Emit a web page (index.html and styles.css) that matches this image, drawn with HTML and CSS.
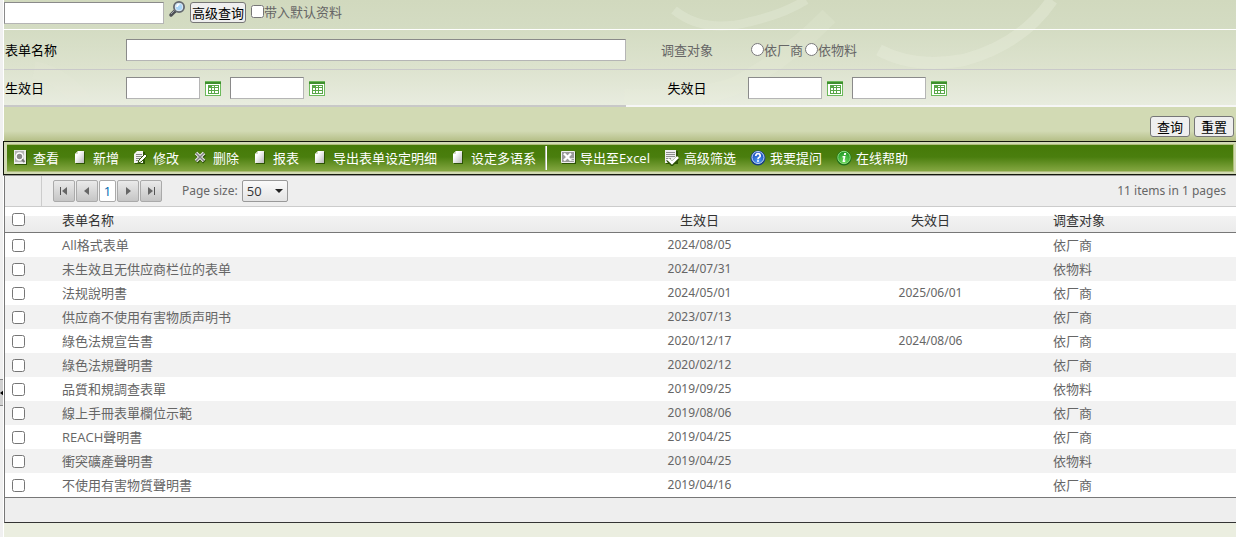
FILE: index.html
```html
<!DOCTYPE html>
<html lang="zh-CN">
<head>
<meta charset="utf-8">
<title>表单设定</title>
<link rel="stylesheet" href="styles.css">
</head>
<body>
<svg width="0" height="0" class="defs" aria-hidden="true">
  <defs>
    <linearGradient id="paper" x1="0" y1="0" x2="1" y2="1"><stop offset="0.3" stop-color="#fff"/><stop offset="1" stop-color="#b9b9b9"/></linearGradient>
    <radialGradient id="blue" cx="0.5" cy="0.8" r="0.8"><stop offset="0" stop-color="#4f9af5"/><stop offset="1" stop-color="#1546b4"/></radialGradient>
    <radialGradient id="green" cx="0.5" cy="0.85" r="0.8"><stop offset="0" stop-color="#6fdc5f"/><stop offset="1" stop-color="#219a27"/></radialGradient>
    <symbol id="i-doc" viewBox="0 0 16 16"><path d="M6 2h6v12H3V5z" fill="#2c5204"/><path d="M5 1h6v12H2V4z" fill="url(#paper)"/><path d="M2 4h3V1z" fill="#d5dcc8"/></symbol>
    <symbol id="i-cal" viewBox="0 0 16 16"><path d="M0 1h16v15H0z" fill="#6cba5b"/><path d="M0 1h16v1H0z" fill="#6cba5b"/><path d="M0 2h16v2H0z" fill="#3f8f2e"/><path d="M1 4h14v11H1z" fill="#fff"/><path d="M3 5h11v9H3z" fill="#58a647"/><path d="M7 6h2v1H7zM10 6h3v1h-3zM4 8h2v2H4zM7 8h2v2H7zM10 8h3v2h-3zM4 11h2v2H4zM7 11h2v2H7zM10 11h3v2h-3z" fill="#fff"/></symbol>
  </defs>
</svg>
<div class="page">
  <aside class="gutter">
    <button class="handle" aria-label="收起"><svg viewBox="0 0 4 8"><path d="M4 1v6L0 4z" fill="#000"/></svg></button>
  </aside>
  <main class="main">
    <form class="query">
      <svg class="swirl" viewBox="0 0 1232 107" preserveAspectRatio="none" aria-hidden="true">
        <g fill="none" stroke="#e9eedc">
          <path d="M670 10Q700 34 745 22Q780 14 802 0" stroke-width="9" opacity="0.35"/>
          <path d="M1048 0Q1018 44 960 60Q910 69 875 50" stroke-width="12" opacity="0.4"/>
          <path d="M825 16Q782 60 731 86Q690 101 620 98" stroke-width="18" opacity="0.2"/>
          <path d="M30 70Q60 76 80 104" stroke-width="18" opacity="0.15"/>
        </g>
      </svg>
      <div class="search">
        <input class="text keyword" type="text" aria-label="关键字">
        <button class="plain look" type="button" aria-label="查询"><svg class="lens" viewBox="0 0 18 18"><path d="M7 11l-4 4" stroke="#4d4f55" stroke-width="3.500" stroke-linecap="round"/><path d="M7 10l-4 4" stroke="#a4a7ad"/><circle cx="11" cy="7" r="5" fill="#a9d6f8" stroke="#64696f" stroke-width="2"/><circle cx="11" cy="7" r="3.800" fill="none" stroke="#dfe9f2"/><path d="M9 7q0-2.500 2.500-2.500" stroke="#fff" stroke-width="1.500" fill="none"/></svg></button>
        <button class="btn" type="button">高级查询</button>
        <label class="choice"><input type="checkbox">带入默认资料</label>
      </div>
      <div class="row row-name">
        <label for="name">表单名称</label>
        <input class="text" id="name" type="text">
        <span class="mid muted">调查对象</span>
        <div class="choices">
          <label class="choice"><input type="radio" name="target">依厂商</label>
          <label class="choice"><input type="radio" name="target">依物料</label>
        </div>
      </div>
      <div class="row row-date">
        <label for="eff">生效日</label>
        <div class="range">
          <input class="text" id="eff" type="text"><button class="plain" type="button" aria-label="选择日期"><svg><use href="#i-cal"/></svg></button>
          <input class="text" type="text" aria-label="生效日至"><button class="plain" type="button" aria-label="选择日期"><svg><use href="#i-cal"/></svg></button>
        </div>
        <label class="mid" for="exp">失效日</label>
        <div class="range">
          <input class="text" id="exp" type="text"><button class="plain" type="button" aria-label="选择日期"><svg><use href="#i-cal"/></svg></button>
          <input class="text" type="text" aria-label="失效日至"><button class="plain" type="button" aria-label="选择日期"><svg><use href="#i-cal"/></svg></button>
        </div>
      </div>
      <div class="actions">
        <button class="btn wide" type="button">查询</button>
        <button class="btn wide" type="reset">重置</button>
      </div>
    </form>

    <nav class="toolbar">
      <div class="tools">
        <button class="tool"><svg viewBox="0 0 16 16"><path d="M2 1h12v14H2z" fill="#2c5204"/><path d="M1 0h12v14H1z" fill="#ececec"/><path d="M2 1h9v11H2z" fill="#b5b5b5"/><circle cx="6.500" cy="6.500" r="3.500" fill="#8a8a8a" stroke="#fff" stroke-width="1.500"/><path d="M9 9.500l2.500 2.500" stroke="#777" stroke-width="2"/></svg>查看</button>
        <button class="tool"><svg><use href="#i-doc"/></svg>新增</button>
        <button class="tool"><svg viewBox="0 0 16 16"><path d="M4 2h8v12H2V4z" fill="#2c5204"/><path d="M4 1h6v12H1V4z" fill="#f3f3f3"/><path d="M3 4.500h6M3 6.500h6M3 8.500h4M3 10.500h3" stroke="#888"/><path d="M5 13l1-3 6-6 2 2-6 6z" fill="#fff" stroke="#315a08"/></svg>修改</button>
        <button class="tool"><svg viewBox="0 0 16 16"><path d="M3.500 4l8 8M11.500 4l-8 8" stroke="#2c5204" stroke-width="4"/><path d="M3 3l8 8M11 3l-8 8" stroke="#ececec" stroke-width="3.500"/><path d="M3 3l8 8M11 3l-8 8" stroke="#808080" stroke-width="1.500"/></svg>删除</button>
        <button class="tool"><svg><use href="#i-doc"/></svg>报表</button>
        <button class="tool"><svg><use href="#i-doc"/></svg>导出表单设定明细</button>
        <button class="tool"><svg><use href="#i-doc"/></svg>设定多语系</button>
        <span class="sep"></span>
        <button class="tool"><svg viewBox="0 0 16 16"><path d="M2 2h14v12H2z" fill="#2c5204"/><path d="M1.500 1.500h13v11h-13z" fill="#9b9b9b" stroke="#f0f0f0"/><path d="M4 3.500l7 7M11 3.500l-7 7" stroke="#fff" stroke-width="2.400"/><path d="M11 8.500h3M11 10.500h3" stroke="#ddd"/></svg>导出至Excel</button>
        <button class="tool"><svg viewBox="0 0 16 16"><path d="M2 1h12v13H2z" fill="#2c5204"/><path d="M1 0h11v13H1z" fill="#eee"/><path d="M2 2.500h9M2 4.500h9M2 6.500h9M2 8.500h5M2 10.500h3" stroke="#8e8e8e"/><path d="M4 10l4 4 6-6" stroke="#2c5204" stroke-width="4" fill="none"/><path d="M4 9l4 4 6-6" stroke="#fff" stroke-width="2.500" fill="none"/></svg>高级筛选</button>
        <button class="tool"><svg viewBox="0 0 16 16"><circle cx="8" cy="8" r="7.500" fill="#173f87"/><circle cx="8" cy="7.500" r="6" fill="url(#blue)" stroke="#c6dafa"/><path d="M5.800 6q0-2.300 2.200-2.300T10.200 6Q10.200 7 8.900 7.600Q8 8 8 9.300" fill="none" stroke="#fff" stroke-width="1.700"/><path d="M7 10.200h2v1.600H7z" fill="#fff"/></svg>我要提问</button>
        <button class="tool"><svg viewBox="0 0 16 16"><circle cx="8" cy="8" r="7.500" fill="#20701c"/><circle cx="8" cy="7.500" r="6.200" fill="url(#green)" stroke="#8edc7c"/><path d="M8.200 3h2L9.800 5h-2zM6.600 6h2.900l-1 4.500h1L9 12H6.500l1-4.500h-1z" fill="#fff"/></svg>在线帮助</button>
      </div>
    </nav>

    <section class="list">
      <div class="pager">
        <span class="corner"></span>
        <div class="pages">
          <button aria-label="首页"><svg viewBox="0 0 10 10"><path d="M1.500 1v8" stroke="#555"/><path d="M8 1v8L3 5z" fill="#666"/></svg></button>
          <button aria-label="上一页"><svg viewBox="0 0 10 10"><path d="M7 1v8L2 5z" fill="#666"/></svg></button>
          <button class="current">1</button>
          <button aria-label="下一页"><svg viewBox="0 0 10 10"><path d="M3 1v8l5-4z" fill="#666"/></svg></button>
          <button aria-label="末页"><svg viewBox="0 0 10 10"><path d="M8.500 1v8" stroke="#555"/><path d="M2 1v8l5-4z" fill="#666"/></svg></button>
        </div>
        <label for="size">Page size:</label>
        <div class="combo">
          <select id="size"><option>50</option></select>
          <svg viewBox="0 0 8 4"><path d="M0 0h8L4 4z" fill="#222"/></svg>
        </div>
        <span class="total">11 items in 1 pages</span>
      </div>
      <table>
        <colgroup><col class="c-check"><col><col class="c-date"><col class="c-date"><col class="c-target"></colgroup>
        <thead><tr><th><input type="checkbox" aria-label="全选"></th><th>表单名称</th><th>生效日</th><th>失效日</th><th>调查对象</th></tr></thead>
        <tbody>
          <tr><td><input type="checkbox" aria-label="选择"></td><td>All格式表单</td><td>2024/08/05</td><td></td><td>依厂商</td></tr>
          <tr><td><input type="checkbox" aria-label="选择"></td><td>未生效且无供应商栏位的表单</td><td>2024/07/31</td><td></td><td>依物料</td></tr>
          <tr><td><input type="checkbox" aria-label="选择"></td><td>法规說明書</td><td>2024/05/01</td><td>2025/06/01</td><td>依厂商</td></tr>
          <tr><td><input type="checkbox" aria-label="选择"></td><td>供应商不使用有害物质声明书</td><td>2023/07/13</td><td></td><td>依厂商</td></tr>
          <tr><td><input type="checkbox" aria-label="选择"></td><td>綠色法規宣告書</td><td>2020/12/17</td><td>2024/08/06</td><td>依厂商</td></tr>
          <tr><td><input type="checkbox" aria-label="选择"></td><td>綠色法規聲明書</td><td>2020/02/12</td><td></td><td>依厂商</td></tr>
          <tr><td><input type="checkbox" aria-label="选择"></td><td>品質和規調查表單</td><td>2019/09/25</td><td></td><td>依物料</td></tr>
          <tr><td><input type="checkbox" aria-label="选择"></td><td>線上手冊表單欄位示範</td><td>2019/08/06</td><td></td><td>依厂商</td></tr>
          <tr><td><input type="checkbox" aria-label="选择"></td><td>REACH聲明書</td><td>2019/04/25</td><td></td><td>依厂商</td></tr>
          <tr><td><input type="checkbox" aria-label="选择"></td><td>衝突礦產聲明書</td><td>2019/04/25</td><td></td><td>依物料</td></tr>
          <tr><td><input type="checkbox" aria-label="选择"></td><td>不使用有害物質聲明書</td><td>2019/04/16</td><td></td><td>依厂商</td></tr>
        </tbody>
      </table>
      <div class="foot"></div>
    </section>
  </main>
</div>
</body>
</html>
```

FILE: styles.css
```css
* { box-sizing: border-box; }
body {
  margin: 0;
  background: #ebeee0;
  color: #666;
  font: 13px/20px "Open Sans", "Noto Sans CJK SC", sans-serif;
}
button, input, select { font: inherit; }
button { padding: 0; }
input[type="checkbox"], input[type="radio"] { width: 13px; height: 13px; margin: 0; }
.defs { position: absolute; }
.page { display: flex; min-height: 100vh; }
.gutter { position: relative; flex: 0 0 4px; background: #f0f0f0; border-right: 1px solid #fff; }
.handle {
  position: absolute; left: 0; top: 379px; width: 3px; height: 27px;
  border: solid #888; border-width: 1px 0; background: #d0d0d0;
}
.handle svg { display: block; width: 3px; height: 8px; }
.main { flex: 1; min-width: 0; }

/* query form */
.query { position: relative; background: linear-gradient(#d1d9be, #d4dcc3 30px, #dce2cd 65px, #e8ecdf 105px); }
.swirl { position: absolute; left: 0; top: 0; width: 100%; height: 107px; }
.search, .row, .actions { position: relative; }
.text {
  height: 22px; min-width: 0; padding: 0 3px;
  border: 1px solid; border-color: #8a8a8a #b5b5b5 #b5b5b5 #8a8a8a; background: #fff;
}
.keyword { width: 160px; }
.plain { border: 0; background: none; display: flex; }
.plain svg { width: 16px; height: 16px; }
.plain .lens { width: 18px; height: 18px; }
.look { align-self: flex-start; }
.btn {
  height: 21px; padding: 0 1px; line-height: 18px; color: #000;
  border: 1px solid #767676; border-radius: 3px; background: #efefef;
}
.wide { width: 40px; }
.search { display: flex; align-items: center; gap: 4px; height: 30px; padding-bottom: 4px; border-bottom: 1px solid #fff; }
.choice { display: flex; align-items: center; }
.search .choice { margin-left: 1px; padding-bottom: 2px; }
.row { display: grid; grid-template-columns: 122px 500px 122px 1fr; align-items: center; color: #000; }
.row-name { height: 40px; border-bottom: 1px solid #c9c9c9; }
.row-name label:first-child, .row-date label:first-child { padding-left: 1px; }
.row-date {
  height: 37px; border-bottom: 2px solid;
  border-image: linear-gradient(90deg, #c8c8c8 622px, #f6f6f6 622px) 2;
}
.mid { text-align: center; }
.muted, .choices { color: #666; }
.choices { display: flex; gap: 2px; padding-left: 2px; }
.range { display: flex; align-items: center; }
.range .text { width: 74px; }
.range .plain { margin: 0 9px 0 5px; }
.actions {
  display: flex; justify-content: flex-end; gap: 4px; padding: 9px 2px 4px;
  background: linear-gradient(#d2dab4 24px, #b5bf87);
}

/* toolbar */
.toolbar {
  position: relative; margin-left: -1px; padding: 2px 2px 2px 3px;
  border: 1px solid #14180c; border-right: 0; background: #d2dab4;
  box-shadow: 0 1px #999;
}
.tools {
  display: flex; align-items: center; height: 28px;
  border: 1px solid #adbd78; border-left: 0;
  background: linear-gradient(#457a07, #4a7e0e 12px, #80a43e 25px);
}
.tool {
  display: flex; align-items: center; gap: 4px; padding: 0 7px;
  border: 0; background: none; color: #fff; white-space: nowrap;
}
.tool svg { width: 16px; height: 16px; }
.tool:first-child { padding-left: 6px; }
.sep { width: 2px; height: 24px; margin: 0 6px 0 2px; background: #b9c0b2; border-right: 1px solid #fff; }

/* list */
.list { border-left: 1px solid #777; border-bottom: 1px solid #333; background: #eee; margin-top: 1px; }
.pager { display: flex; align-items: center; height: 31px; border-bottom: 1px solid #ccc; }
.corner { align-self: stretch; width: 37px; border-right: 1px solid #ccc; }
.pages { display: flex; gap: 1px; margin: 0 20px 0 11px; }
.pages button {
  display: grid; place-items: center; width: 22px; height: 22px;
  border: 1px solid #aaa; border-radius: 2px; background: linear-gradient(#eaeaea, #c5c5c5);
}
.pages svg { width: 10px; height: 10px; }
.pages .current { width: 17px; background: #fff; color: #0068b0; line-height: 20px; }
.pager label, .pager .total, td:nth-child(3), td:nth-child(4) { font-family: "Noto Sans", sans-serif; font-size: 12px; }
.combo { position: relative; margin-left: 4px; }
.combo select {
  appearance: none; display: block; width: 46px; height: 22px; padding: 0 4px;
  border: 1px solid #999; border-radius: 2px; color: #333; background: linear-gradient(#fafafa, #e4e4e4);
}
.combo svg { position: absolute; right: 5px; top: 9px; width: 8px; height: 4px; pointer-events: none; }
.total { margin-left: auto; padding-right: 10px; }
table { width: 100%; table-layout: fixed; border-collapse: separate; border-spacing: 0; background: #fff; }
.c-check { width: 47px; }
.c-date { width: 231px; }
.c-target { width: 190px; }
th, td { height: 24px; padding: 0; font-weight: 400; text-align: center; white-space: nowrap; }
th { height: 26px; color: #333; border-bottom: 1px solid #777; background: linear-gradient(#fff 9px, #f3f3f3 9px, #ebebeb); }
th:first-child, td:first-child { padding-left: 7px; text-align: left; }
td input, th input { display: block; }
th:nth-child(2), td:nth-child(2) { padding-left: 10px; text-align: left; }
th:last-child, td:last-child { padding-left: 7px; text-align: left; }
tbody tr:nth-child(even) { background: #f2f2f2; }
.foot { height: 25px; border-top: 1px solid #777; }
```
